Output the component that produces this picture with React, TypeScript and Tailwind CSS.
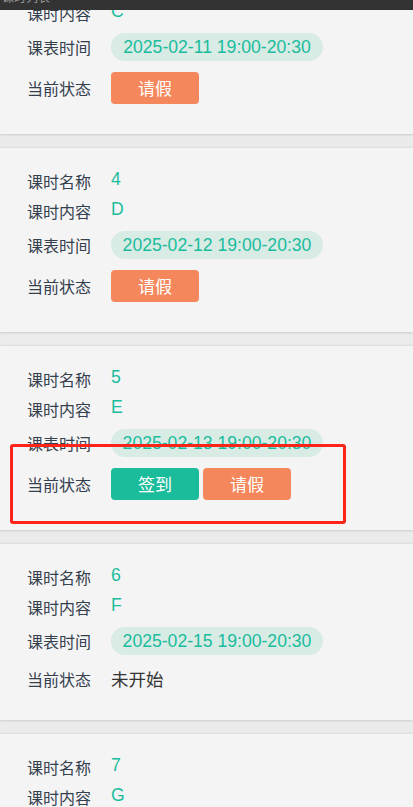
const lessons = [
  { name: "3", content: "C", time: "2025-02-11 19:00-20:30", status: "leave" },
  { name: "4", content: "D", time: "2025-02-12 19:00-20:30", status: "leave" },
  { name: "5", content: "E", time: "2025-02-13 19:00-20:30", status: "both" },
  { name: "6", content: "F", time: "2025-02-15 19:00-20:30", status: "pending" },
  { name: "7", content: "G", time: "2025-02-16 19:00-20:30", status: "pending" },
] as const;

type Lesson = (typeof lessons)[number];

const cjk = "font-['Noto_Sans_CJK_SC',sans-serif]";
const latin = "font-['Liberation_Sans',Arial,sans-serif]";
const labelCls = `w-[111px] shrink-0 whitespace-nowrap pl-[27px] text-[16px] text-[#34404e] ${cjk}`;

function LessonCard({ lesson, marked }: { lesson: Lesson; marked?: boolean }) {
  const hasButtons = lesson.status !== "pending";
  return (
    <div className="relative mb-[14px] bg-[#f4f4f4] pt-[18px] shadow-[0_1px_2px_rgba(0,0,0,0.12),0_-1px_2px_rgba(0,0,0,0.06)]">
      <div className="flex h-[30px] items-center">
        <span className={labelCls}>课时名称</span>
        <span className={`-mt-[4px] text-[17.6px] text-[#1abc9c] ${latin}`}>{lesson.name}</span>
      </div>
      <div className="flex h-[30px] items-center">
        <span className={labelCls}>课时内容</span>
        <span className={`-mt-[4px] text-[17.6px] text-[#1abc9c] ${latin}`}>{lesson.content}</span>
      </div>
      <div className="mt-[5px] flex h-[28px] items-center">
        <span className={labelCls}>课表时间</span>
        <span
          className={`flex h-[28px] w-[212px] items-center justify-center whitespace-nowrap rounded-full bg-[#d8ebe5] text-[17.6px] text-[#1abc9c] ${latin}`}
        >
          {lesson.time}
        </span>
      </div>
      {hasButtons ? (
        <div className="mt-[11px] flex h-[32px] items-center">
          <span className={labelCls}>当前状态</span>
          <div className="flex gap-[4px]">
            {lesson.status === "both" ? (
              <button
                type="button"
                className={`flex h-[32px] w-[88px] items-center justify-center rounded-[4px] bg-[#1abc9c] text-[17px] text-white ${cjk}`}
              >
                签到
              </button>
            ) : null}
            <button
              type="button"
              className={`flex h-[32px] w-[88px] items-center justify-center rounded-[4px] bg-[#f5875c] text-[17px] text-white ${cjk}`}
            >
              请假
            </button>
          </div>
        </div>
      ) : (
        <div className="mt-[12px] flex h-[24px] items-center">
          <span className={labelCls}>当前状态</span>
          <span className={`text-[17.5px] text-[#333] ${cjk}`}>未开始</span>
        </div>
      )}
      <div className={hasButtons ? "h-[30px]" : "h-[29px]"} />
      {marked ? (
        <div className="pointer-events-none absolute left-[10px] top-[98px] h-[80px] w-[336px] rounded-[3px] border-[3px] border-[#ff2419]" />
      ) : null}
    </div>
  );
}

export default function App() {
  return (
    <div className="relative h-[807px] overflow-hidden bg-[#ebebeb]">
      <div className="-mt-[50px]">
        {lessons.map((lesson, i) => (
          <LessonCard key={lesson.name} lesson={lesson} marked={i === 2} />
        ))}
      </div>
      <div className="absolute left-0 right-0 top-0 h-[10px] overflow-hidden bg-[#333333]">
        <span className={`-mt-[11px] block whitespace-nowrap pl-[2px] text-[12px] leading-[16px] text-[#9a9a9a] ${cjk}`}>
          课时列表
        </span>
      </div>
    </div>
  );
}
